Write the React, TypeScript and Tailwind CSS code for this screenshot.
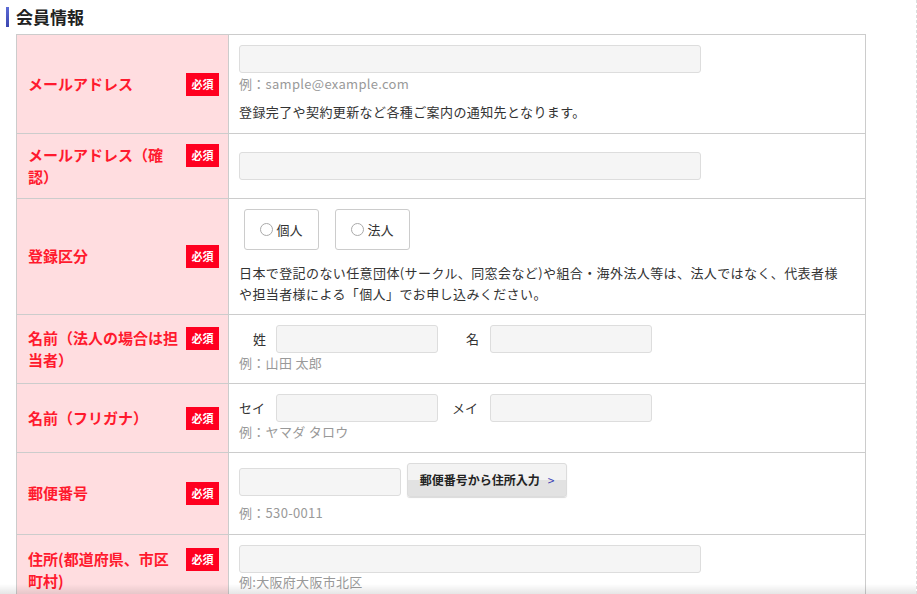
const font = {
  fontFamily: '"Noto Sans CJK JP", "Liberation Sans", sans-serif',
};

function Badge() {
  return (
    <span className="flex h-[23px] w-[33px] shrink-0 items-center justify-center bg-[#ff0020] text-[11px] font-bold text-white">
      必須
    </span>
  );
}

function Label({ children }: { children: React.ReactNode }) {
  return (
    <td className="w-[212px] border border-[#cccccc] bg-[#ffdde0] py-0 pl-[11px] pr-[9px] align-middle">
      <div className="flex items-start justify-between">
        <div className="w-[152px] text-[15px] font-bold leading-[22px] text-[#ff1a2e]">
          {children}
        </div>
        <Badge />
      </div>
    </td>
  );
}

function Input({ w }: { w: string }) {
  return (
    <div
      className={`${w} h-[28px] rounded-[3px] border border-[#dddddd] bg-[#f5f5f5]`}
    />
  );
}

function Example({ children }: { children: React.ReactNode }) {
  return (
    <div className="text-[13px] leading-[18px] tracking-[0.3px] text-[#999999]">{children}</div>
  );
}

function Radio({ label }: { label: string }) {
  return (
    <div className="flex h-[41px] w-[75px] items-center justify-center gap-[3px] rounded-[3px] border border-[#cccccc] bg-white text-[13px] text-[#333]">
      <span className="h-[13px] w-[13px] rounded-full border border-[#aaaaaa] bg-white" />
      {label}
    </div>
  );
}

export default function App() {
  return (
    <div className="relative h-[594px] w-[917px] overflow-hidden border-r border-dashed border-[#dddddd] bg-white" style={font}>
      <div className="flex h-[34px] items-center pl-[6px]">
        <span className="h-[20px] w-[3px] bg-gradient-to-b from-[#5c6bd6] to-[#3b45b0]" />
        <h2 className="ml-[7px] text-[17px] font-bold text-[#222]">会員情報</h2>
      </div>

      <table className="ml-[16px] w-[850px] border-collapse">
        <tbody>
          <tr className="h-[99px]">
            <Label>メールアドレス</Label>
            <td className="border border-[#cccccc] px-[10px] pb-[11px] pt-[10px] align-top">
              <Input w="w-[462px]" />
              <div className="mt-[2px]">
                <Example>例：sample@example.com</Example>
              </div>
              <p className="mt-[10px] text-[13px] leading-[18px] tracking-[0.4px] text-[#333]">
                登録完了や契約更新など各種ご案内の通知先となります。
              </p>
            </td>
          </tr>

          <tr className="h-[65px]">
            <Label>メールアドレス（確認）</Label>
            <td className="border border-[#cccccc] px-[10px] align-middle">
              <Input w="w-[462px]" />
            </td>
          </tr>

          <tr className="h-[116px]">
            <Label>登録区分</Label>
            <td className="border border-[#cccccc] pb-[9px] pl-[10px] pr-[8px] pt-[10px] align-top">
              <div className="flex gap-[16px] pl-[5px]">
                <Radio label="個人" />
                <Radio label="法人" />
              </div>
              <p className="mt-[12px] w-[606px] text-[13px] leading-[21px] tracking-[0.4px] text-[#333]">
                日本で登記のない任意団体(サークル、同窓会など)や組合・海外法人等は、法人ではなく、代表者様
                <br />
                や担当者様による「個人」でお申し込みください。
              </p>
            </td>
          </tr>

          <tr className="h-[69px]">
            <Label>名前（法人の場合は担当者）</Label>
            <td className="border border-[#cccccc] px-[10px] pt-[10px] align-top">
              <div className="flex items-center text-[13px] text-[#333]">
                <span className="w-[37px] pl-[14px]">姓</span>
                <Input w="w-[162px]" />
                <span className="w-[52px] pl-[28px]">名</span>
                <Input w="w-[162px]" />
              </div>
              <div className="mt-[1px]">
                <Example>例：山田 太郎</Example>
              </div>
            </td>
          </tr>

          <tr className="h-[69px]">
            <Label>名前（フリガナ）</Label>
            <td className="border border-[#cccccc] px-[10px] pt-[10px] align-top">
              <div className="flex items-center text-[13px] text-[#333]">
                <span className="w-[37px]">セイ</span>
                <Input w="w-[162px]" />
                <span className="w-[52px] pl-[14px]">メイ</span>
                <Input w="w-[162px]" />
              </div>
              <div className="mt-[1px]">
                <Example>例：ヤマダ タロウ</Example>
              </div>
            </td>
          </tr>

          <tr className="h-[82px]">
            <Label>郵便番号</Label>
            <td className="border border-[#cccccc] px-[10px] pt-[10px] align-top">
              <div className="flex items-end gap-[6px]">
                <Input w="w-[162px]" />
                <button className="relative mb-[-1px] flex h-[34px] w-[160px] items-center justify-center overflow-hidden rounded-[3px] border border-[#dcdcdc] bg-[linear-gradient(#f3f3f3_0%,#f3f3f3_50%,#e2e2e2_50%,#e2e2e2_100%)] text-[12px] font-bold text-[#222] shadow-[0_1px_1px_rgba(0,0,0,0.15)]">
                  郵便番号から住所入力
                  <span className="ml-[8px] font-normal text-[#3b3fb5]">&gt;</span>
                </button>
              </div>
              <div className="mt-[8px]">
                <Example>例：530-0011</Example>
              </div>
            </td>
          </tr>

          <tr className="h-[70px]">
            <Label>住所(都道府県、市区町村)</Label>
            <td className="border border-[#cccccc] px-[10px] pt-[10px] align-top">
              <Input w="w-[462px]" />
              <Example>例:大阪府大阪市北区</Example>
            </td>
          </tr>
        </tbody>
      </table>

      <div className="pointer-events-none absolute bottom-0 left-0 h-[10px] w-full bg-gradient-to-b from-transparent to-black/10" />
    </div>
  );
}
